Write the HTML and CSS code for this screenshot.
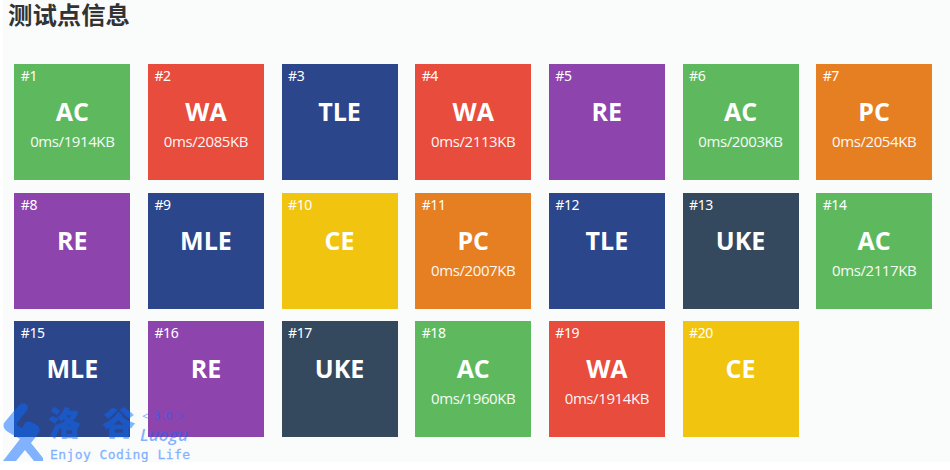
FILE: index.html
```html
<!DOCTYPE html>
<html lang="zh-CN">
<head>
<meta charset="utf-8">
<title>测试点信息</title>
<link rel="stylesheet" href="styles.css">
</head>
<body>
<main class="panel">
<h1 class="title">测试点信息</h1>
<div class="grid">
<div class="case ac"><span class="num">#1</span><strong>AC</strong><span class="stat">0ms/1914KB</span></div>
<div class="case wa"><span class="num">#2</span><strong>WA</strong><span class="stat">0ms/2085KB</span></div>
<div class="case le"><span class="num">#3</span><strong>TLE</strong></div>
<div class="case wa"><span class="num">#4</span><strong>WA</strong><span class="stat">0ms/2113KB</span></div>
<div class="case re"><span class="num">#5</span><strong>RE</strong></div>
<div class="case ac"><span class="num">#6</span><strong>AC</strong><span class="stat">0ms/2003KB</span></div>
<div class="case pc"><span class="num">#7</span><strong>PC</strong><span class="stat">0ms/2054KB</span></div>
<div class="case re"><span class="num">#8</span><strong>RE</strong></div>
<div class="case le"><span class="num">#9</span><strong>MLE</strong></div>
<div class="case ce"><span class="num">#10</span><strong>CE</strong></div>
<div class="case pc"><span class="num">#11</span><strong>PC</strong><span class="stat">0ms/2007KB</span></div>
<div class="case le"><span class="num">#12</span><strong>TLE</strong></div>
<div class="case uke"><span class="num">#13</span><strong>UKE</strong></div>
<div class="case ac"><span class="num">#14</span><strong>AC</strong><span class="stat">0ms/2117KB</span></div>
<div class="case le"><span class="num">#15</span><strong>MLE</strong></div>
<div class="case re"><span class="num">#16</span><strong>RE</strong></div>
<div class="case uke"><span class="num">#17</span><strong>UKE</strong></div>
<div class="case ac"><span class="num">#18</span><strong>AC</strong><span class="stat">0ms/1960KB</span></div>
<div class="case wa"><span class="num">#19</span><strong>WA</strong><span class="stat">0ms/1914KB</span></div>
<div class="case ce"><span class="num">#20</span><strong>CE</strong></div>
</div>
<svg class="watermark" width="195" height="65" viewBox="0 0 195 65">
<path d="M18 6Q22 2 26 4Q29 6 27 10L17 23Q16 25 18 26L22 28L25 23Q27 21 31 22L37 25Q41 28 39 32Q36 37 31 43L43 58V61H34L25 50L16 61H3L20 39L8 32Q2 28 4 23Z"/>
<text class="brand" x="49" y="35" textLength="86">洛谷</text>
<text class="version" x="142" y="20" textLength="42">&lt; 3.0 &gt;</text>
<text class="latin" x="140" y="41" textLength="48">Luogu</text>
<text class="slogan" x="50" y="59" textLength="140">Enjoy Coding Life</text>
</svg>
</main>
</body>
</html>
```
FILE: styles.css
```css
body {
  margin: 0;
  background: #fff;
}
.panel {
  position: relative;
  box-sizing: border-box;
  height: 462px;
  margin: 0 0 0 3px;
  padding: 0 0 0 11.3px;
  background: #fafcfc;
  font-family: "Open Sans", "Noto Sans CJK SC", sans-serif;
}
.title {
  height: 64px;
  margin: 0 0 0 -6.3px;
  color: #333;
  font: bold 24.4px/27px "Noto Sans CJK SC", sans-serif;
}
.grid {
  display: grid;
  grid-template-columns: repeat(7, 116px);
  grid-auto-rows: 116px;
  gap: 12.6px 17.65px;
}
.case {
  display: flex;
  flex-direction: column;
  align-items: center;
  color: #fff;
}
.num {
  align-self: flex-start;
  height: 30px;
  margin-left: 6.5px;
  font-family: "Noto Sans", sans-serif;
  font-size: 14px;
  line-height: 24px;
  letter-spacing: -.4px;
}
.case strong {
  font-size: 25px;
  line-height: 34px;
}
.stat {
  font-size: 15px;
  line-height: 27px;
  letter-spacing: -.4px;
  opacity: .95;
}
.ac { background: #5eb95e; }
.wa { background: #e74c3c; }
.le { background: #2c468c; }
.re { background: #8e44ad; }
.pc { background: #e67e22; }
.ce { background: #f1c40f; }
.uke { background: #34495e; }
.watermark {
  position: absolute;
  left: -3px;
  top: 400px;
  fill: #0a6aff;
  opacity: .5;
  overflow: visible;
}
.brand { font: 900 32px "Noto Sans CJK SC", sans-serif; stroke: #0a6aff; stroke-width: .6px; }
.version { font: 600 11.5px "Open Sans", sans-serif; }
.latin { font: italic 600 17px "Open Sans", sans-serif; }
.slogan { font: 13px "DejaVu Sans Mono", monospace; stroke: #0a6aff; stroke-width: .3px; }
```
